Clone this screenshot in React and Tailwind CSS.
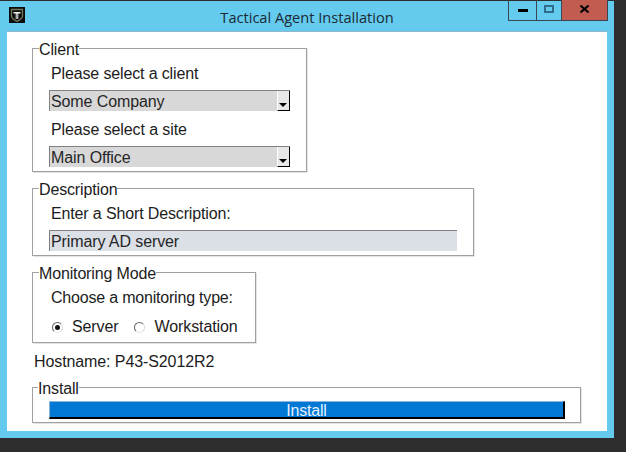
const Box = ({ title, className, legendClass = "ml-[6px]", children }) => (
  <fieldset className={`border border-[#a0a0a0] shadow-[1px_1px_0_#e4e4e4] ${className}`}>
    <legend className={`${legendClass} translate-y-[1px] pt-[2px] text-[16px] leading-[18px] tracking-[-0.15px] text-[#1c1c1c]`}>{title}</legend>
    <div className="pl-[16px]">{children}</div>
  </fieldset>
);

const Select = ({ value }) => (
  <div className="flex h-[21px] w-[241px] items-stretch border-t border-l border-[#808080] bg-[#d8d8d8]">
    <span className="flex-1 pl-[1px] text-[16px] leading-[21px] tracking-[-0.1px] text-[#262626]">{value}</span>
    <span className="relative w-[13px] border-r border-b border-l border-black border-l-white bg-[#e8e8e8]">
      <svg className="absolute left-[1px] bottom-[2px]" width="8" height="5" viewBox="0 0 8 5">
        <path d="M0 0h8l-4 4z" fill="#000" />
      </svg>
    </span>
  </div>
);

const Radio = ({ on }) => (
  <span className="flex h-[11px] w-[11px] items-center justify-center rounded-full border border-[#606060] border-r-[#d8d8d8] border-b-[#e8e8e8] bg-white">
    {on && <span className="h-[5px] w-[5px] rounded-full bg-[#111]" />}
  </span>
);

export default function App() {
  return (
    <div
      className="h-[452px] w-[626px] overflow-hidden bg-[#2d2d2d] pt-[1px] text-[#1c1c1c]"
      style={{ fontFamily: '"Liberation Sans", Arial, sans-serif' }}
    >
      <div className="flex h-[437px] w-[614px] flex-col bg-[#65cbee] px-[7px] pb-[7px]">
        <div className="grid h-[30px] flex-none grid-cols-[1fr_auto_1fr]">
          <div className="pl-[2px] pt-[6px]">
            <svg width="16" height="16" viewBox="0 0 16 16" className="block">
              <rect width="16" height="16" fill="#0c0c0c" />
              <path d="M2.500 2.500h11v6.500c0 2.500-2.800 4-5.500 5.300C5.300 13 2.500 11.500 2.500 9z" fill="none" stroke="#6f7a5e" strokeWidth="1.300" />
              <path d="M4.500 5h7v1.500H9.300v5.500H8.300V6.500h-.6v5.500H6.700V6.500H4.500z" fill="#f2f2f2" />
            </svg>
          </div>
          <div className="pt-[6px] text-center text-[14.6px] leading-[20px] text-[#1a2a33]" style={{ fontFamily: '"Open Sans", sans-serif' }}>
            Tactical Agent Installation
          </div>
          <div className="flex items-start justify-end">
            <div className="-mr-[1px] -mt-[1px] flex h-[21px] border-x border-b border-[#3a4750]">
              <div className="flex w-[28px] items-center justify-center border-r border-[#3a4750]">
                <span className="mt-[1px] h-[3px] w-[10px] bg-black" />
              </div>
              <div className="flex w-[25px] items-center justify-center border-r border-[#3a4750]">
                <span className="-mt-[2px] h-[8px] w-[10px] border-2 border-[#2f6d8c]" />
              </div>
              <div className="flex w-[45px] items-center justify-center bg-[#c25b50]">
                <svg width="9" height="8" viewBox="0 0 9 8" className="-mt-[3px]">
                  <path d="M0.500 0.500L8.500 7.500M8.500 0.500L0.500 7.500" stroke="#000" strokeWidth="2" />
                </svg>
              </div>
            </div>
          </div>
        </div>

        <div className="flex flex-1 flex-col items-start border-t border-[#8fb7c9] bg-white pl-[25px] pt-[6px]">
          <Box title="Client" className="h-[134px] w-[275px]">
            <div className="mt-[7px] pl-[2px] text-[16px] leading-[18px] tracking-[-0.14px]">Please select a client</div>
            <div className="mt-[7px]"><Select value="Some Company" /></div>
            <div className="mt-[10px] pl-[2px] text-[16px] leading-[18px] tracking-[-0.1px]">Please select a site</div>
            <div className="mt-[7px]"><Select value="Main Office" /></div>
          </Box>

          <Box title="Description" className="mt-[6px] h-[78px] w-[442px]">
            <div className="mt-[7px] pl-[2px] text-[16px] leading-[18px] tracking-[-0.14px]">Enter a Short Description:</div>
            <div className="mt-[7px] h-[21px] w-[408px] border-t border-l border-[#808080] bg-[#dbdfe6] pl-[1px] text-[16px] leading-[21px] tracking-[-0.1px] text-[#262626]">
              Primary AD server
            </div>
          </Box>

          <Box title="Monitoring Mode" className="mt-[6px] h-[81px] w-[224px]">
            <div className="mt-[7px] pl-[2px] text-[16px] leading-[18px] tracking-[-0.2px]">Choose a monitoring type:</div>
            <div className="mt-[11px] flex items-center pl-[3px] text-[16px] leading-[18px]">
              <Radio on />
              <span className="ml-[9px] tracking-[-0.1px]">Server</span>
              <span className="ml-[15px]"><Radio /></span>
              <span className="ml-[10px] tracking-[-0.1px]">Workstation</span>
            </div>
          </Box>

          <div className="mt-[10px] pl-[2px] text-[16px] leading-[18px] tracking-[-0.1px]">Hostname: P43-S2012R2</div>

          <Box title="Install" legendClass="ml-[5px]" className="mt-[6px] h-[46px] w-[549px]">
            <div className="mt-[4px] h-[18px] w-[516px] border-t border-r-2 border-b-2 border-l border-t-[#8fb4dc] border-r-black border-b-black border-l-[#8fb4dc] bg-[#0078d4] text-center text-[16px] leading-[17px] tracking-[-0.2px] text-[#e6f1fb]">
              Install
            </div>
          </Box>
        </div>
      </div>
    </div>
  );
}
